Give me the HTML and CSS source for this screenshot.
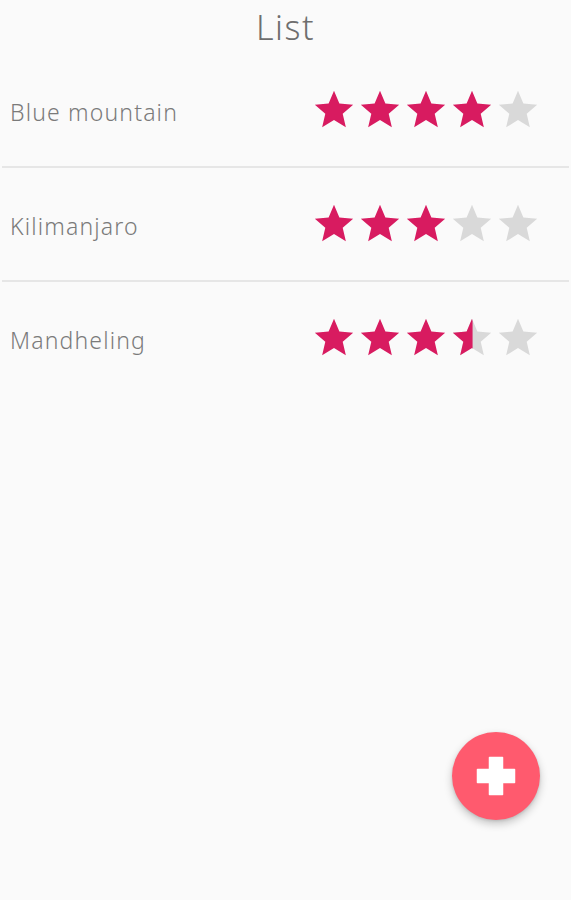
FILE: index.html
```html
<!DOCTYPE html>
<html>
<head>
<meta charset="utf-8">
<link rel="stylesheet" href="styles.css">
</head>
<body>
<svg width="0" height="0" class="defs">
  <defs>
    <path id="star" d="M12 17.27L18.18 21l-1.64-7.03L22 9.24l-7.19-.61L12 2 9.19 8.63 2 9.24l5.46 4.73L5.82 21z"/>
    <clipPath id="half"><rect x="0" y="0" width="12.3" height="24"/></clipPath>
  </defs>
</svg>
<header class="header"><h1 class="title">List</h1></header>
<ul class="list">
  <li class="row">
    <span class="name">Blue mountain</span>
    <div class="stars">
      <svg class="star" viewBox="0 0 24 24"><use href="#star" class="on"/></svg>
      <svg class="star" viewBox="0 0 24 24"><use href="#star" class="on"/></svg>
      <svg class="star" viewBox="0 0 24 24"><use href="#star" class="on"/></svg>
      <svg class="star" viewBox="0 0 24 24"><use href="#star" class="on"/></svg>
      <svg class="star" viewBox="0 0 24 24"><use href="#star" class="off"/></svg>
    </div>
  </li>
  <li class="divider"></li>
  <li class="row">
    <span class="name">Kilimanjaro</span>
    <div class="stars">
      <svg class="star" viewBox="0 0 24 24"><use href="#star" class="on"/></svg>
      <svg class="star" viewBox="0 0 24 24"><use href="#star" class="on"/></svg>
      <svg class="star" viewBox="0 0 24 24"><use href="#star" class="on"/></svg>
      <svg class="star" viewBox="0 0 24 24"><use href="#star" class="off"/></svg>
      <svg class="star" viewBox="0 0 24 24"><use href="#star" class="off"/></svg>
    </div>
  </li>
  <li class="divider"></li>
  <li class="row">
    <span class="name">Mandheling</span>
    <div class="stars">
      <svg class="star" viewBox="0 0 24 24"><use href="#star" class="on"/></svg>
      <svg class="star" viewBox="0 0 24 24"><use href="#star" class="on"/></svg>
      <svg class="star" viewBox="0 0 24 24"><use href="#star" class="on"/></svg>
      <svg class="star" viewBox="0 0 24 24"><use href="#star" class="off"/><use href="#star" class="on" clip-path="url(#half)"/></svg>
      <svg class="star" viewBox="0 0 24 24"><use href="#star" class="off"/></svg>
    </div>
  </li>
</ul>
<button class="fab" aria-label="Add">
  <svg viewBox="0 0 40 40" width="40" height="40"><path d="M13.5 1.5h13v12h12v13h-12v12h-13v-12h-12v-13h12z" fill="#fff" stroke="#fff" stroke-width="1.5" stroke-linejoin="round"/></svg>
</button>
</body>
</html>
```

FILE: styles.css
```css
html, body {
  margin: 0;
  padding: 0;
  background: #fafafa;
  height: 100%;
}
body {
  font-family: "Noto Sans", "Open Sans", sans-serif;
  color: #777;
}
.defs {
  position: absolute;
  width: 0;
  height: 0;
}
.header {
  height: 54px;
  display: flex;
  align-items: center;
  justify-content: center;
}
.title {
  margin: 0;
  font-size: 34px;
  font-weight: 300;
  color: #6e6e6e;
  letter-spacing: 1.5px;
  line-height: 1;
}
.list {
  list-style: none;
  margin: 0;
  padding: 0;
}
.row {
  height: 112px;
  display: flex;
  align-items: center;
  justify-content: space-between;
  padding: 0 30px 0 10px;
}
.name {
  font-size: 23px;
  font-weight: 300;
  letter-spacing: 1.15px;
  color: #7a7a7a;
  padding-top: 3px;
}
.stars {
  display: flex;
}
.star {
  width: 46px;
  height: 46px;
  display: block;
}
.on { fill: #d81b60; }
.off { fill: #d9d9d9; }
.divider {
  height: 2px;
  margin: 0 2px;
  background: #e6e6e6;
}
.fab {
  position: fixed;
  right: 31px;
  bottom: 80px;
  width: 88px;
  height: 88px;
  border-radius: 50%;
  border: none;
  background: #ff5a6e;
  box-shadow: 0 4px 8px rgba(0,0,0,0.22), 0 1px 3px rgba(0,0,0,0.12);
  display: flex;
  align-items: center;
  justify-content: center;
  padding: 0;
}
.fab svg {
  display: block;
}
```
